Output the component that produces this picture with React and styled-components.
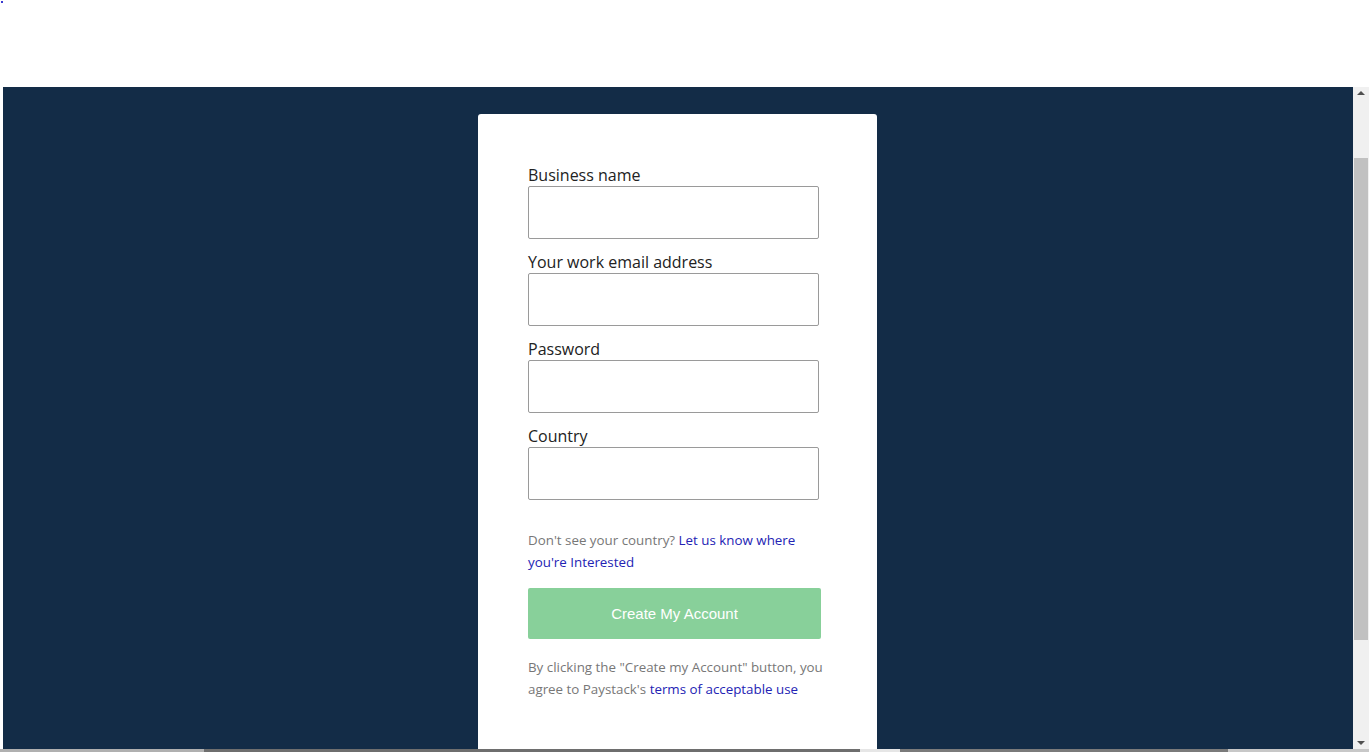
import styled, { createGlobalStyle } from 'styled-components';

const GlobalStyle = createGlobalStyle`
  html, body {
    margin: 0;
    padding: 0;
    background: #ffffff;
    font-family: "Open Sans", "Noto Sans", sans-serif;
  }
  * { box-sizing: border-box; }
`;

const fields = ['Business name', 'Your work email address', 'Password', 'Country'];

const App = () => (
  <>
    <GlobalStyle />
    <Page>
      <TopBar>
        <Dot />
      </TopBar>
      <Frame>
        <Main>
          <Card>
            {fields.map((label) => (
              <Field key={label}>
                <Label>{label}</Label>
                <Input type={label === 'Password' ? 'password' : 'text'} />
              </Field>
            ))}

            <Note>
              Don't see your country? <Link href="#">Let us know where you're Interested</Link>
            </Note>

            <Button type="button">Create My Account</Button>

            <Terms>
              By clicking the "Create my Account" button, you agree to Paystack's{' '}
              <Link href="#">terms of acceptable use</Link>
            </Terms>
          </Card>
        </Main>
        <Scrollbar>
          <Arrow $up />
          <Track>
            <Thumb />
          </Track>
          <Arrow />
        </Scrollbar>
      </Frame>
      <BottomStrip />
    </Page>
  </>
);

const Page = styled.div`
  display: flex;
  flex-direction: column;
  width: 1369px;
  height: 752px;
  overflow: hidden;
`;

const TopBar = styled.div`
  height: 87px;
  padding: 1px;
`;

const Dot = styled.span`
  display: block;
  width: 2px;
  height: 2px;
  background: #3a3ad0;
`;

const Frame = styled.div`
  display: flex;
  height: 662px;
  margin-left: 3px;
`;

const Main = styled.div`
  flex: 1;
  display: flex;
  justify-content: center;
  padding-top: 27px;
  background: #132c47;
  overflow: hidden;
`;

const Card = styled.div`
  flex: none;
  width: 399px;
  height: 760px;
  padding: 50px 50px 0 50px;
  background: #ffffff;
  border-radius: 3px;
  margin-left: -1px;
`;

const Field = styled.div`
  display: flex;
  flex-direction: column;
  margin-bottom: 12px;
`;

const Label = styled.label`
  font-size: 16px;
  line-height: 22px;
  color: #222222;
`;

const Input = styled.input`
  width: 291px;
  height: 53px;
  padding: 0 12px;
  border: 1px solid #9a9a9a;
  border-radius: 2px;
  background: #ffffff;
  font-family: inherit;
  font-size: 15px;
  outline: none;
`;

const Note = styled.p`
  margin: 29px 0 0;
  width: 291px;
  font-size: 13.35px;
  line-height: 22px;
  color: #777777;
`;

const Link = styled.a`
  color: #2323b4;
  text-decoration: none;
`;

const Button = styled.button`
  display: block;
  width: 293px;
  height: 51px;
  margin-top: 15px;
  border: none;
  border-radius: 2px;
  background: #88d09a;
  color: #ffffff;
  font-family: "Liberation Sans", Arial, sans-serif;
  font-size: 15px;
  cursor: pointer;
`;

const Terms = styled(Note)`
  margin-top: 17px;
  width: 300px;
`;

const Scrollbar = styled.div`
  display: flex;
  flex-direction: column;
  width: 16px;
  background: #f0f0f0;
`;

const Arrow = styled.div`
  height: 12px;
  display: flex;
  align-items: center;
  justify-content: center;

  &::before {
    content: '';
    border-left: 4px solid transparent;
    border-right: 4px solid transparent;
    ${(p) =>
      p.$up ? 'border-bottom: 4px solid #505050;' : 'border-top: 4px solid #505050;'}
  }
`;

const Track = styled.div`
  flex: 1;
  padding: 59px 1px 0 1px;
`;

const Thumb = styled.div`
  height: 482px;
  background: #c1c1c1;
`;

const BottomStrip = styled.div`
  height: 3px;
  background: linear-gradient(
    to right,
    #b0b0b0 0 204px,
    #6e6e6e 204px 860px,
    #e6e6e6 860px 900px,
    #7a7a7a 900px 1228px,
    #c8c8c8 1228px
  );
`;

export default App;
